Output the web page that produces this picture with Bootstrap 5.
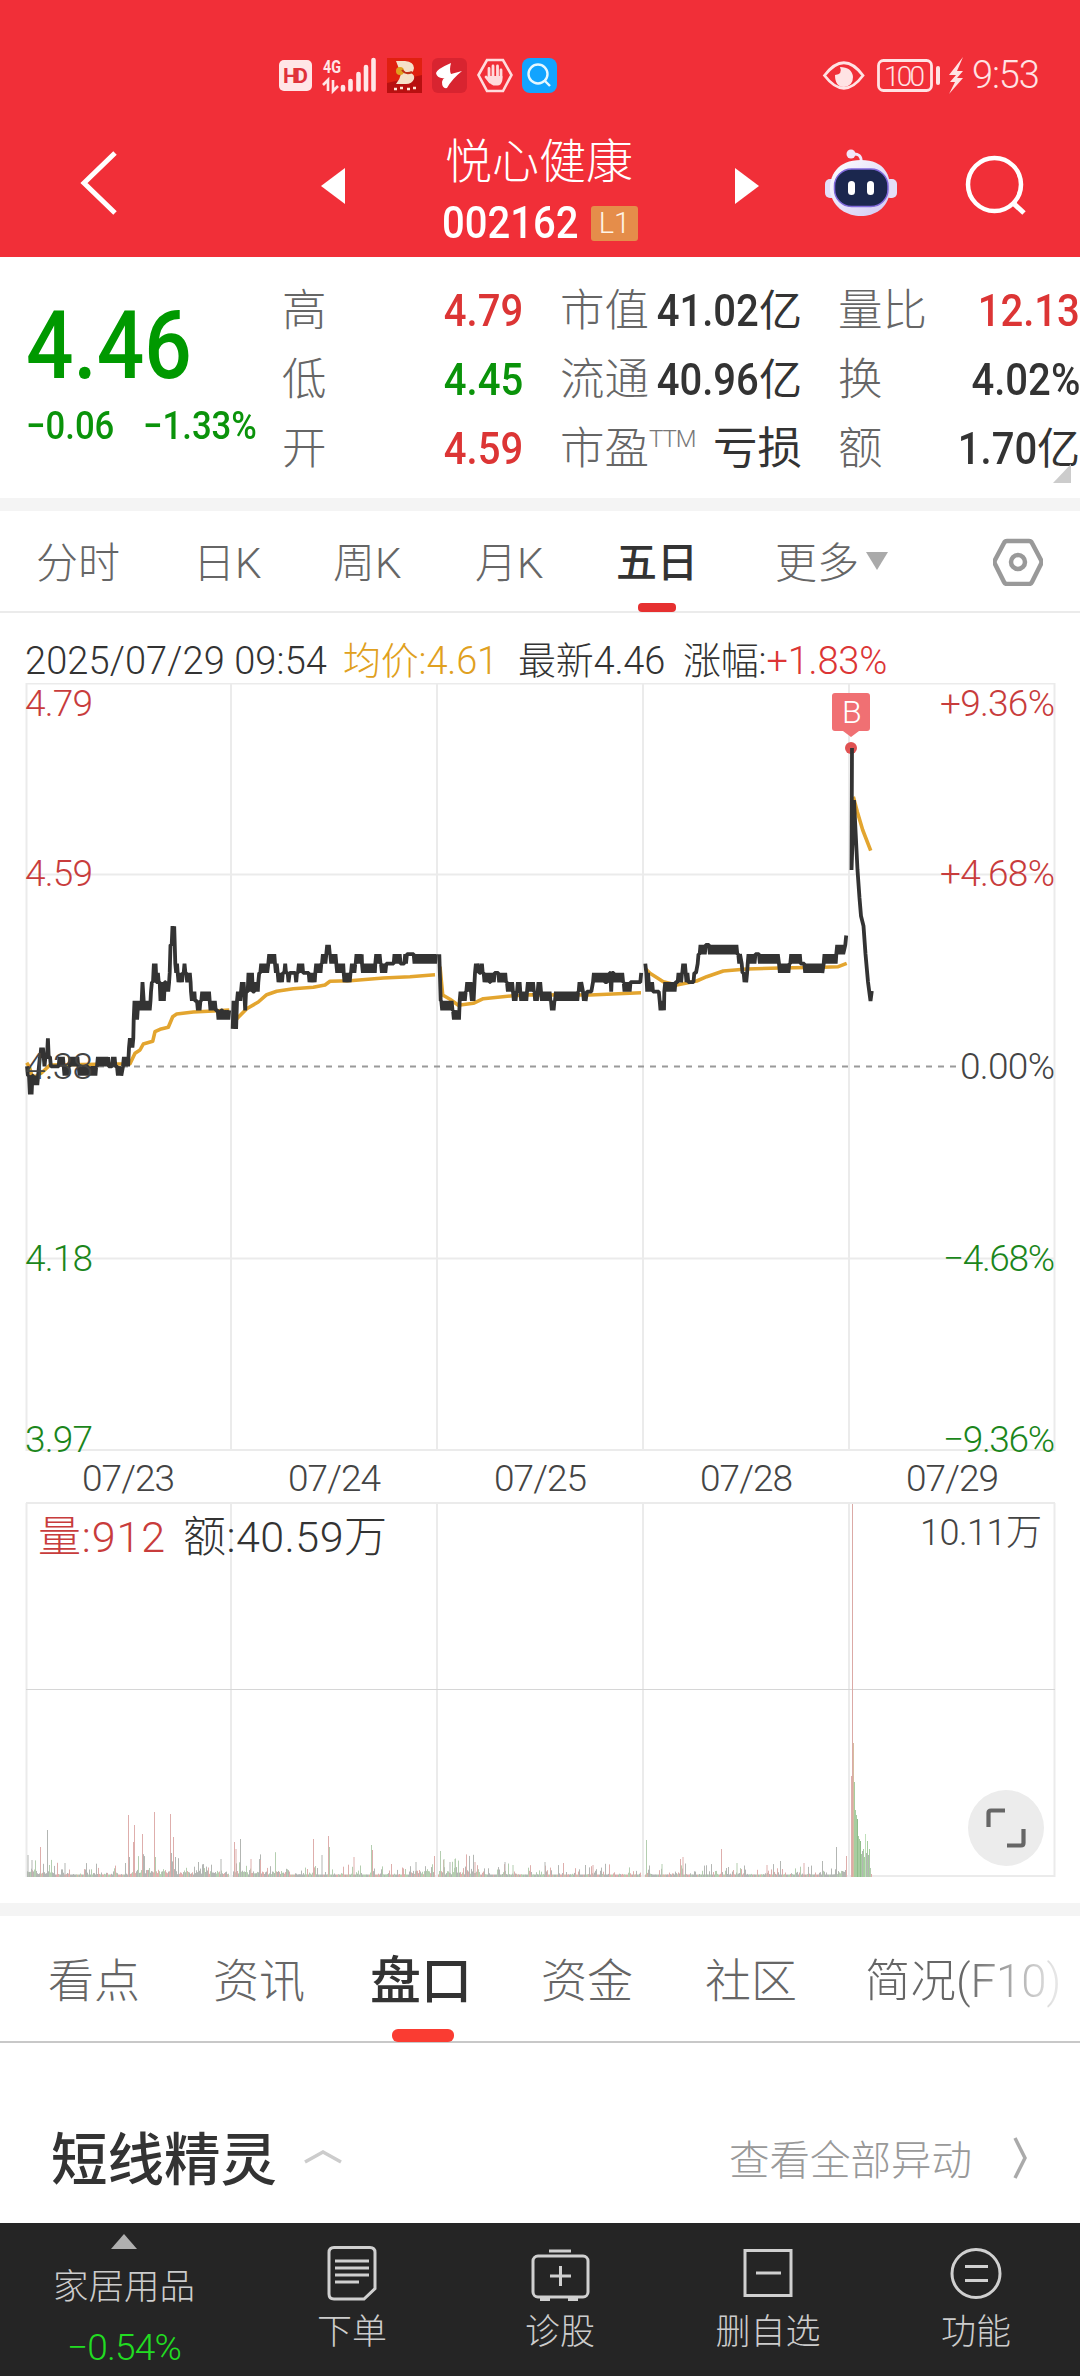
<!DOCTYPE html>
<html lang="zh-CN">
<head>
<meta charset="utf-8">
<meta name="viewport" content="width=device-width, initial-scale=1">
<title>悦心健康 002162</title>
<link href="https://cdn.jsdelivr.net/npm/bootstrap@5.3.0/dist/css/bootstrap.min.css" rel="stylesheet">
<style>
body{width:1080px;height:2376px;overflow:hidden;background:#fff;color:#333;font-family:Roboto,"Noto Sans CJK SC",sans-serif;font-weight:300;line-height:1;white-space:nowrap}
svg{display:block;flex:none}
.up{color:#dc3535}.down{color:#0a930a}.avg{color:#e0a020}
/* narrow medium figures */
.cond{display:inline-block;font-weight:500;transform:scaleX(.89);transform-origin:right center}
.cond-l{transform-origin:left center}
.app-head{height:257px;background:#f12f38;color:#fff}
.status{height:100px;padding:50px 42px 0 279px}
.status .clock{font-size:38px;width:66px;letter-spacing:-1.1px;line-height:50px;color:#ffe3e4}
.titlebar{height:157px}
.titlebar .back{padding:50px 0 0 80px;width:321px}
.stock-name{font-size:47px;line-height:58px;height:58px;padding-left:3px}
.stock-code{font-size:45px;line-height:44px;width:137px}
.lv{width:47px;height:35px;background:#e58d4a;border-radius:3px;font-size:29px;line-height:35px;color:#fff5e8}
.quote{height:241px;padding:25px 0 0 26px;position:relative}
.price{font-size:94px;color:#090;line-height:94px;margin-top:17px}
.chg{font-size:39px;line-height:40px;margin-top:13px}
.qcol{width:242px}
.qrow{height:69px;font-size:44.500px;line-height:58px}
.qrow .lab{color:#666}
.qrow .val{font-size:45px;line-height:57px}
.qrow .val i{font-style:normal;font-weight:400;font-size:43px}
.ttm{font-size:24px;line-height:38px;letter-spacing:-1px;color:#777}
.corner{position:absolute;left:1053px;top:207px}
.band{height:13px;background:#f4f4f4}
.period{height:102px;border-bottom:2px solid #ebebeb;font-size:42px;color:#666}
.period>div{line-height:105px;height:101px}
.period .on,.subtabs .on{position:relative;color:#333;font-weight:500}
.period .on:after{content:"";position:absolute;left:22px;bottom:0;width:38px;height:9px;border-radius:4px;background:#e63030}
.info{height:70px;padding:19px 0 0 25px;font-size:38px;line-height:59px;letter-spacing:-.2px}
.chart text{font-family:Roboto,"Noto Sans CJK SC",sans-serif;font-weight:300}
.subtabs{height:127px;border-bottom:2px solid #c8c8c8;font-size:46px;color:#666}
.subtabs>div{line-height:131px;height:126px}
.subtabs .on{font-size:51px;left:-2px}
.subtabs .on:after{content:"";position:absolute;left:22px;bottom:0;width:62px;height:13px;border-radius:6px;background:#fa3c32}
.subtabs .fade-end{background:linear-gradient(90deg,#666 50%,#e6e6e6 97%);-webkit-background-clip:text;background-clip:text;color:transparent}
.sprite-row{height:180px;padding:56px 53px 0 51px}
.sprite-row h2{font-size:56.500px;font-weight:500;line-height:124px;margin:0}
.sprite-row .more{font-size:40.500px;color:#999;line-height:124px}
.dock{height:153px;background:#252525;color:#ccc;font-size:35px}
.dock .cell{width:208px}
.dock .first{width:248px;padding-top:11px}
</style>
</head>
<body>
<header class="app-head">
  <div class="status d-flex align-items-start">
    <svg width="280" height="50" viewBox="279 50 280 50">
      <rect x="279" y="60" width="33" height="31" rx="5" fill="#ffe6e7"/>
      <text x="283" y="83" font-size="21" font-weight="700" fill="#e0323a" textLength="25" font-family="Roboto">HD</text>
      <text x="323" y="73" font-size="18" font-weight="700" fill="#ffe6e7" textLength="18" lengthAdjust="spacingAndGlyphs" font-family="Roboto">4G</text>
      <path d="M323 85l5-5v11M333 80v11l5-5" fill="none" stroke="#ffe6e7" stroke-width="2.6"/>
      <path d="M343 87v2.500M350.500 81v8.500M358.500 74v15.500M366 67v22.500M373.500 60v29.500" stroke="#ffe6e7" stroke-width="4.600" stroke-linecap="round"/>
      <path fill="#e02010" d="M387 58h35v35h-35z"/><path fill="#b81010" d="M387 93v-10l35-8v18z"/>
      <path fill="#f5e0c8" d="M396 61h9q9 1 9 7 0 3-3 5 4 2 3 6-2 5-8 5h-10q4-5 5-10z"/><circle cx="400" cy="71" r="4" fill="#e0a020"/><path d="M402 70q4 5 10 2" stroke="#c03018" stroke-width="2" fill="none"/>
      <path d="M394 89h3m3-1h3m4 1h3m3-1h3" stroke="#ffe6d8" stroke-width="2.400"/>
      <rect x="432" y="58" width="35" height="35" rx="6" fill="#d82430"/>
      <path fill="#fff" d="M451 63q-2 7 0 11l11-3q-10 8-15 17-5 1-5-6 1-4 3-4-8 1-9-5 1-4 15-10z"/>
      <path d="M478.500 75l8.500-15h16l8.500 15-8.500 16h-16z" fill="none" stroke="#ffdcdd" stroke-width="2.600"/>
      <path d="M489 68.500v10M493 66v10M497.500 66v10M501 70v8M486 77l4 5" stroke="#ffdcdd" stroke-width="2.800" stroke-linecap="round"/><path d="M488 76h14.400v4q-1 5.500-5 5.500h-4q-3-1-5.400-5z" fill="#ffdcdd"/>
      <rect x="522" y="58" width="35" height="35" rx="8" fill="#12a4ff"/>
      <circle cx="538" cy="74" r="9.500" fill="none" stroke="#e6f8ff" stroke-width="2.400"/><path d="M544 80l6 6" stroke="#e6f8ff" stroke-width="2.400"/>
    </svg>
    <svg class="ms-auto" width="150" height="50" viewBox="822 50 150 50">
      <path d="M824.500 75.500Q844 50 863 75.500 844 101 824.500 75.500z" fill="none" stroke="#ffe3e4" stroke-width="2.800"/>
      <path d="M840 67q3 7-5 8 0 12 9 12 9-1 9-10-1-10-13-10z" fill="#ffe3e4"/>
      <rect x="878.500" y="60.500" width="53" height="30" rx="5" fill="none" stroke="#ffe3e4" stroke-width="2.800"/>
      <path d="M938 68v15" stroke="#ffe3e4" stroke-width="4" stroke-linecap="round"/>
      <text x="884" y="85.500" font-size="28" font-weight="300" fill="#ffe3e4" textLength="41" font-family="Roboto">100</text>
      <path d="M963 57l-14 18h7l-6 7h5l-6 12 14-16h-6l6-7h-6z" fill="#ffe3e4"/>
    </svg>
    <div class="clock">9:53</div>
  </div>
  <div class="titlebar d-flex">
    <div class="back"><svg width="38" height="66" viewBox="80 150 38 66"><path d="M115 153L84 183l31 30" fill="none" stroke="#fff" stroke-width="5"/></svg></div>
    <svg width="24" height="36" viewBox="0 0 24 36" style="margin-top:68px"><path d="M0 18L24 0v36z" fill="#fff"/></svg>
    <div class="d-flex flex-column" style="width:390px;padding:33px 0 0 97px">
      <div class="stock-name">悦心健康</div>
      <div class="d-flex align-items-center" style="margin-top:10px"><span class="stock-code"><span class="cond cond-l">002162</span></span><span class="lv text-center" style="margin-left:12px">L1</span></div>
    </div>
    <svg width="24" height="36" viewBox="0 0 24 36" style="margin-top:68px"><path d="M24 18L0 0v36z" fill="#fff"/></svg>
    <svg width="76" height="76" viewBox="822 145 76 76" style="margin:45px 0 0 63px">
      <defs><linearGradient id="face" x1="0" y1="0" x2="1" y2="1"><stop offset="0" stop-color="#fff"/><stop offset="1" stop-color="#d0c8f4"/></linearGradient></defs>
      <path d="M852 154q10-1 9 8" fill="none" stroke="#f2e6fa" stroke-width="3"/><circle cx="851" cy="154" r="4.500" fill="#f2e6fa"/>
      <rect x="825" y="179" width="12" height="19" rx="5" fill="#e4def8"/><rect x="885" y="179" width="12" height="19" rx="5" fill="#e4def8"/>
      <path d="M861 160c24 0 30 16 29 31-2 18-16 25-29 25s-28-7-31-25c-1-15 7-31 31-31z" fill="url(#face)"/>
      <rect x="834.500" y="169" width="53.500" height="37.500" rx="17" fill="#1b274e" stroke="#8069dc" stroke-width="1.500"/>
      <rect x="848" y="181" width="7" height="14" rx="3.500" fill="#fff"/><rect x="867" y="181" width="7" height="14" rx="3.500" fill="#fff"/>
    </svg>
    <svg width="64" height="64" viewBox="964 154 64 64" style="margin:54px 0 0 66px"><circle cx="994.500" cy="184.500" r="26.500" fill="none" stroke="#fff" stroke-width="4.500"/><path d="M1013 203l11 10" stroke="#fff" stroke-width="5"/></svg>
  </div>
</header>

<section class="quote d-flex">
  <div style="width:256px">
    <div class="price"><span class="cond cond-l">4.46</span></div>
    <div class="chg down d-flex"><span style="width:117px"><span class="cond cond-l">−0.06</span></span><span class="cond cond-l">−1.33%</span></div>
  </div>
  <div class="qcol" style="width:241px;margin-right:37px">
    <div class="qrow d-flex justify-content-between"><span class="lab">高</span><span class="val up"><span class="cond">4.79</span></span></div>
    <div class="qrow d-flex justify-content-between"><span class="lab">低</span><span class="val down"><span class="cond">4.45</span></span></div>
    <div class="qrow d-flex justify-content-between"><span class="lab">开</span><span class="val up"><span class="cond">4.59</span></span></div>
  </div>
  <div class="qcol" style="margin-right:36px">
    <div class="qrow d-flex justify-content-between"><span class="lab">市值</span><span class="val" style="margin-left:-20px"><span class="cond">41.02</span><i>亿</i></span></div>
    <div class="qrow d-flex justify-content-between"><span class="lab">流通</span><span class="val" style="margin-left:-20px"><span class="cond">40.96</span><i>亿</i></span></div>
    <div class="qrow d-flex"><span class="lab">市盈</span><span class="ttm">TTM</span><span class="ms-auto fw-normal">亏损</span></div>
  </div>
  <div class="qcol">
    <div class="qrow d-flex justify-content-between"><span class="lab">量比</span><span class="val up"><span class="cond">12.13</span></span></div>
    <div class="qrow d-flex justify-content-between"><span class="lab">换</span><span class="val"><span class="cond">4.02%</span></span></div>
    <div class="qrow d-flex justify-content-between"><span class="lab">额</span><span class="val"><span class="cond">1.70</span><i>亿</i></span></div>
  </div>
  <svg class="corner" width="18" height="19" viewBox="0 0 18 19"><path d="M0 19L18 0v19z" fill="#ccc"/></svg>
</section>
<div class="band"></div>

<nav class="period d-flex">
  <div style="width:159px;padding-left:36px">分时</div>
  <div style="width:137px;padding-left:34px">日K</div>
  <div style="width:142px;padding-left:37px">周K</div>
  <div style="width:142px;padding-left:37px">月K</div>
  <div style="width:36px"></div><div class="on" style="width:159px;font-size:41px">五日</div>
  <div style="width:91px">更多</div>
  <svg width="22" height="18" viewBox="0 0 22 18" style="margin-top:41px"><path d="M0 0h22L11 18z" fill="#aaa"/></svg>
  <svg width="50" height="48" viewBox="993 538 50 48" style="margin:27px 0 0 105px"><path d="M1007 541h22q2 0 3 2l9 17q1 2 0 4l-9 18q-1 2-3 2h-22q-2 0-3-2l-9-18q-1-2 0-4l9-17q1-2 3-2z" fill="none" stroke="#999" stroke-width="4.500"/><circle cx="1018" cy="562" r="7" fill="none" stroke="#999" stroke-width="4.500"/></svg>
</nav>

<div class="info d-flex"><span style="width:318px;letter-spacing:.1px">2025/07/29 09:54</span><span class="avg" style="width:175px">均价:4.61</span><span style="width:165px">最新4.46</span><span>涨幅:<span class="up">+1.83%</span></span></div>

<svg class="chart" id="chart" width="1080" height="1220" viewBox="0 683 1080 1220">
  <g fill="none" stroke="#ebebeb" stroke-width="2">
    <path d="M26 683.500H1055M26 874.500H1055M26 1258.500H1055M26 1450H1055M26.500 683V1451M231 683V1451M437 683V1451M643 683V1451M849 683V1451M1054.500 683V1451"/>
    <path d="M26 1503H1055M26 1876H1055M26.500 1503V1877M231 1503V1877M437 1503V1877M643 1503V1877M849 1503V1877M1054.500 1503V1877"/>
    <path d="M26 1689.500H1055" stroke="#d6d6d6" stroke-width="1.200"/>
  </g>
  <path d="M98 1066.500H958" stroke="#9a9a9a" stroke-width="2" stroke-dasharray="6 6"/>
  <g id="vol" stroke-width="1"></g>
  <g fill="none" stroke="#e3a52f" stroke-width="3.600" stroke-linejoin="round" id="avgLines"></g>
  <circle cx="851" cy="748" r="6" fill="#e05252"/>
  <g fill="none" stroke="#333" stroke-width="3.800" stroke-linejoin="bevel" id="priceLines"></g>
  <path d="M835 693h32q3 0 3 3v32q0 3-3 3h-8l-8 6-8-6h-8q-3 0-3-3v-32q0-3 3-3z" fill="#f07073"/>
  <text x="842" y="723" font-size="32" fill="#fff" textLength="19">B</text>
  <g font-size="37" fill="#444">
    <g fill="#c83c3c"><text x="25" y="716" textLength="68">4.79</text><text x="25" y="886" textLength="68">4.59</text><text x="940" y="716" textLength="115">+9.36%</text><text x="940" y="886" textLength="115">+4.68%</text></g>
    <text x="25" y="1079" textLength="68">4.38</text><text x="960" y="1079" textLength="95">0.00%</text>
    <g fill="#1b861b"><text x="25" y="1271" textLength="68">4.18</text><text x="25" y="1452" textLength="68">3.97</text><text x="943" y="1271" textLength="112">−4.68%</text><text x="943" y="1452" textLength="112">−9.36%</text></g>
    <text x="82" y="1491" textLength="93">07/23</text><text x="288" y="1491" textLength="93">07/24</text><text x="494" y="1491" textLength="93">07/25</text><text x="700" y="1491" textLength="93">07/28</text><text x="906" y="1491" textLength="93">07/29</text>
    <text x="920" y="1545" font-size="36" textLength="122">10.11万</text>
  </g>
  <g font-size="43"><text x="38" y="1552" fill="#c83c3c" textLength="127">量:912</text><text x="183" y="1552" fill="#333" textLength="204">额:40.59万</text></g>
  <circle cx="1006" cy="1828" r="38" fill="#ececec"/>
  <path d="M988.500 1827v-14q0-2.500 2.500-2.500h14M1007 1845.500h14q2.500 0 2.500-2.500v-14" fill="none" stroke="#666" stroke-width="4.200"/>
</svg>
<div class="band"></div>

<nav class="subtabs d-flex">
  <div style="width:213px;padding-left:48px">看点</div>
  <div style="width:159px">资讯</div>
  <div class="on" style="width:169px">盘口</div>
  <div style="width:164px">资金</div>
  <div style="width:160px">社区</div>
  <div class="fade-end" style="font-size:45.500px">简况(F10)</div>
</nav>
<div class="sprite-row d-flex">
  <h2>短线精灵</h2>
  <svg width="38" height="14" viewBox="0 0 38 14" style="margin:51px 0 0 27px"><path d="M1 12L19 2l18 10" fill="none" stroke="#ccc" stroke-width="3.500"/></svg>
  <div class="more ms-auto">查看全部异动</div>
  <svg width="14" height="42" viewBox="0 0 14 42" style="margin:38px 0 0 41px"><path d="M2 1l10 20L2 41" fill="none" stroke="#aaa" stroke-width="3.500"/></svg>
</div>

<footer class="dock d-flex">
  <div class="first d-flex flex-column align-items-center">
    <svg width="26" height="15" viewBox="0 0 26 15"><path d="M0 15L13 0l13 15z" fill="#b0b0b0"/></svg>
    <div style="margin-top:19px;line-height:38px;font-size:35.500px">家居用品</div>
    <div style="margin-top:23px;line-height:38px;font-size:37px;letter-spacing:-.8px;color:#22dd22">−0.54%</div>
  </div>
  <div class="cell d-flex flex-column align-items-center"><svg width="60" height="60" viewBox="0 0 60 60" style="margin-top:20px"><g fill="none" stroke="#d0d0d0" stroke-width="3"><path d="M12 4.500h36q5 0 5 5v36L42 56H12q-5 0-5-5V9.500q0-5 5-5z"/><path d="M13 18h34M13 25h34M13 32h34M13 39h24"/></g></svg><div style="margin-top:11px;line-height:38px">下单</div></div>
  <div class="cell d-flex flex-column align-items-center"><svg width="60" height="60" viewBox="0 0 60 60" style="margin-top:20px"><g fill="none" stroke="#d0d0d0" stroke-width="3"><rect x="3" y="13" width="55" height="41" rx="5"/><path d="M19 8h22M30.500 23v20M20 33h21"/><path d="M10 56h10M38 56h10" stroke-width="4"/></g></svg><div style="margin-top:11px;line-height:38px">诊股</div></div>
  <div class="cell d-flex flex-column align-items-center"><svg width="60" height="60" viewBox="0 0 60 60" style="margin-top:20px"><path d="M7 7.500h46v45H7zM18 30h25" fill="none" stroke="#d0d0d0" stroke-width="3"/></svg><div style="margin-top:11px;line-height:38px">删自选</div></div>
  <div class="cell d-flex flex-column align-items-center"><svg width="60" height="60" viewBox="0 0 60 60" style="margin-top:20px"><g fill="none" stroke="#d0d0d0" stroke-width="3"><circle cx="30" cy="30.500" r="24"/><path d="M19 23.500h23M19 37.500h23"/></g></svg><div style="margin-top:11px;line-height:38px">功能</div></div>
</footer>

<script>
const NS='http://www.w3.org/2000/svg';
const add=(id,d,stroke)=>{const p=document.createElementNS(NS,'path');p.setAttribute('d',d);if(stroke)p.setAttribute('stroke',stroke);document.getElementById(id).appendChild(p)};
// Price sessions: [origin, [x from, x to, low tick, high tick]...]; ticks are cents above the 4.38 close.
const sessions=[
[0,[[80,84,0,-1],[86,98,-3,-1],[98,116,-2,-1],[116,122,0,1],[120,130,1,2],[130,138,0,1],[140,148,1,3],[149,155,0,1],[157,175,0,0],[175,190,0,1],[190,208,-1,0],[208,235,0,1],[235,262,-1,0],[262,290,-1,0],[290,325,0,1],[325,335,0,0],[335,348,0,1],[350,365,-1,0],[368,386,0,1],[386,400,2,3],[400,412,5,7],[412,424,6,7],[424,430,7,9],[430,452,6,7],[452,458,8,9],[458,470,9,11],[470,478,9,10],[478,496,7,9],[496,508,8,9],[508,514,10,13],[514,525,13,15],[525,532,10,11],[532,550,9,10],[550,558,10,11],[558,572,9,10],[572,584,7,8],[584,592,7,7],[590,603,6,7],[603,628,7,8],[628,646,6,7],[646,652,6,6],[652,664,5,6],[666,690,5,6]]],
[0,[[697,710,4,7],[710,722,7,8],[722,732,8,9],[732,740,6,8],[742,760,8,10],[762,774,8,9],[774,780,9,10],[780,804,10,11],[804,824,11,12],[824,832,10,11],[832,850,9,10],[852,860,10,11],[862,868,9,10],[868,885,10,10],[885,893,9,10],[893,910,10,11],[910,925,10,10],[925,945,9,10],[945,965,10,11],[965,978,11,12],[978,990,12,13],[990,1008,11,12],[1008,1030,10,11],[1030,1052,9,10],[1052,1066,10,11],[1066,1085,11,12],[1085,1125,10,11],[1125,1142,11,12],[1142,1158,10,11],[1158,1180,11,11],[1180,1202,11,12],[1202,1212,11,11],[1212,1222,11,12],[1222,1240,12,12],[1240,1308,11,12]]],
[430,[[27,29,12,12],[31,33,7,7],[33,68,6,7],[68,88,5,6],[88,108,7,8],[108,122,8,9],[122,132,7,8],[134,145,10,11],[147,150,10,10],[152,160,10,11],[160,180,9,10],[180,196,9,10],[196,204,10,10],[204,230,9,10],[230,248,8,9],[248,260,7,8],[260,270,8,9],[270,290,7,8],[290,312,8,9],[312,322,7,8],[322,332,8,9],[332,362,7,8],[362,374,6,7],[374,445,7,8],[445,455,8,9],[458,468,7,8],[470,486,8,8],[488,524,9,10],[524,530,9,9],[530,540,9,10],[540,548,8,10],[550,580,9,10],[580,602,8,9],[602,625,9,9],[630,635,9,10]]],
[430,[[645,647,11,11],[648,655,8,10],[655,670,8,9],[670,688,8,8],[688,702,6,7],[702,738,8,9],[742,756,9,10],[756,766,10,11],[766,774,9,10],[774,792,9,9],[792,800,10,10],[802,808,11,12],[808,828,12,13],[828,836,13,13],[836,924,12,13],[924,932,11,12],[934,940,10,11],[940,952,9,10],[952,978,11,12],[978,986,12,12],[986,1046,11,12],[1046,1080,10,11],[1080,1114,11,12],[1122,1178,10,11],[1180,1218,11,12],[1218,1240,12,13],[1245,1250,13,14]]]];
const py=n=>(1066.3-9.34*n).toFixed(1);
sessions.forEach(([ox,segs])=>{
  let d='',prev=0;
  segs.forEach(([a,b,lo,hi])=>{
    let k=Math.abs(lo-prev)<Math.abs(hi-prev)?0:1;
    for(let x=a+1;x<=b;x+=2.57){prev=k%2?hi:lo;d+=(d?'L':'M')+(ox+x/3).toFixed(1)+' '+py(prev);k++}
  });
  add('priceLines',d);
});
add('priceLines','M852 748L851.500 870L854 800L857.500 870L859.500 898L861 916L863.500 926L865.500 954L868 982L870.500 1001L871.800 991');
const averages=[
[0,880,[80,548,88,560,95,585,105,590,125,578,150,555,390,551,405,520,420,510,430,492,458,484,465,455,480,448,505,442,518,410,530,402,580,396,640,393,688,390]],
[0,880,[698,430,715,412,740,386,775,366,800,344,830,334,880,326,940,322,975,315,990,304,1050,302,1150,294,1230,290,1305,284]],
[430,880,[30,260,38,345,60,358,85,376,130,370,160,356,250,347,300,344,480,345,633,338]],
[430,880,[645,265,660,280,700,305,740,315,800,303,830,290,880,273,950,267,1050,264,1180,262,1225,260,1250,250]],
[800,670,[160,380,172,425,188,480,212,542]]];
averages.forEach(([ox,oy,v])=>{let d='';for(let i=0;i<v.length;i+=2)d+=(i?'L':'M')+(ox+v[i]/3).toFixed(1)+' '+(oy+v[i+1]/3).toFixed(1);add('avgLines',d)});
// Minute volume: quiet background bars, then the notable spikes.
const R='#deaeac',G='#b4ceb0',K='#b3b6b3';
let s=7;const rnd=()=>(s=(s*16807)%2147483647)/2147483647;
const bar=(x,h,c)=>add('vol','M'+x+' 1877v-'+h.toFixed(1),c);
for(let x=27.5;x<847;x+=1){
  if((x>229&&x<233)||(x>435&&x<438)||(x>641&&x<645))continue;
  const busy=(x<55||(x>128&&x<230)||(x>233&&x<290)||(x>410&&x<480)||(x>838))?1.7:1;
  const r=rnd();bar(x,2.5+Math.pow(r,7)*12*busy+(busy>1?rnd()*3.5:0),[R,K,G,K][Math.floor(rnd()*4)]);
}
[[28,22,K],[32,17,K],[40.5,30,R],[47.5,47,K],[65,14,K],[128.500,62,R],[133.500,35,R],[134.500,52,R],[142.500,43,R],[154.500,65,R],[155.500,20,G],[170.500,63,R],[171.500,24,K],[173.500,40,R],[175.500,20,K],[198.500,15,K],[221,18,K],[234.500,35,R],[236,28,R],[240.500,38,K],[251,18,R],[260.500,17,R],[313.500,38,R],[322,22,K],[328.500,41,R],[329.500,30,G],[354,20,R],[371.500,32,G],[372.500,27,R],[416,15,K],[434.500,21,R],[440.500,26,G],[444,18,G],[450,15,K],[455,18,G],[475,15,R],[505,15,K],[513,12,G],[545,15,K],[593,12,R],[646.500,37,G],[662,13,G],[680.500,18,R],[683,20,R],[721.500,28,R],[737,14,G],[767,12,R],[780.500,16,K],[804,14,R],[822.500,16,K],[836.500,30,K],[846.500,21,R],[851.500,101,R],[852.500,373,'#dbaaa6'],[853.500,134,'#d6bda0'],[854.500,95,'#a6cda0'],[855.500,67,'#a6cda0'],[856.500,62,'#a6cda0'],[857.500,58,'#8fbd8a'],[858.500,41,'#a6cda0'],[859.500,38,'#a6cda0'],[860.500,36,'#8fbd8a'],[861.500,23,'#a6cda0'],[862.500,26,K],[863.500,28,'#a6cda0'],[864.500,20,'#a6cda0'],[865.500,43,'#bfe0ba'],[866.500,24,K],[867.500,36,'#a6cda0'],[868.500,22,K],[869.500,28,'#a6cda0'],[870.500,9,G],[871.500,3,R]].forEach(b=>bar(...b));
</script>
<script src="https://cdn.jsdelivr.net/npm/bootstrap@5.3.0/dist/js/bootstrap.bundle.min.js"></script>
</body>
</html>
